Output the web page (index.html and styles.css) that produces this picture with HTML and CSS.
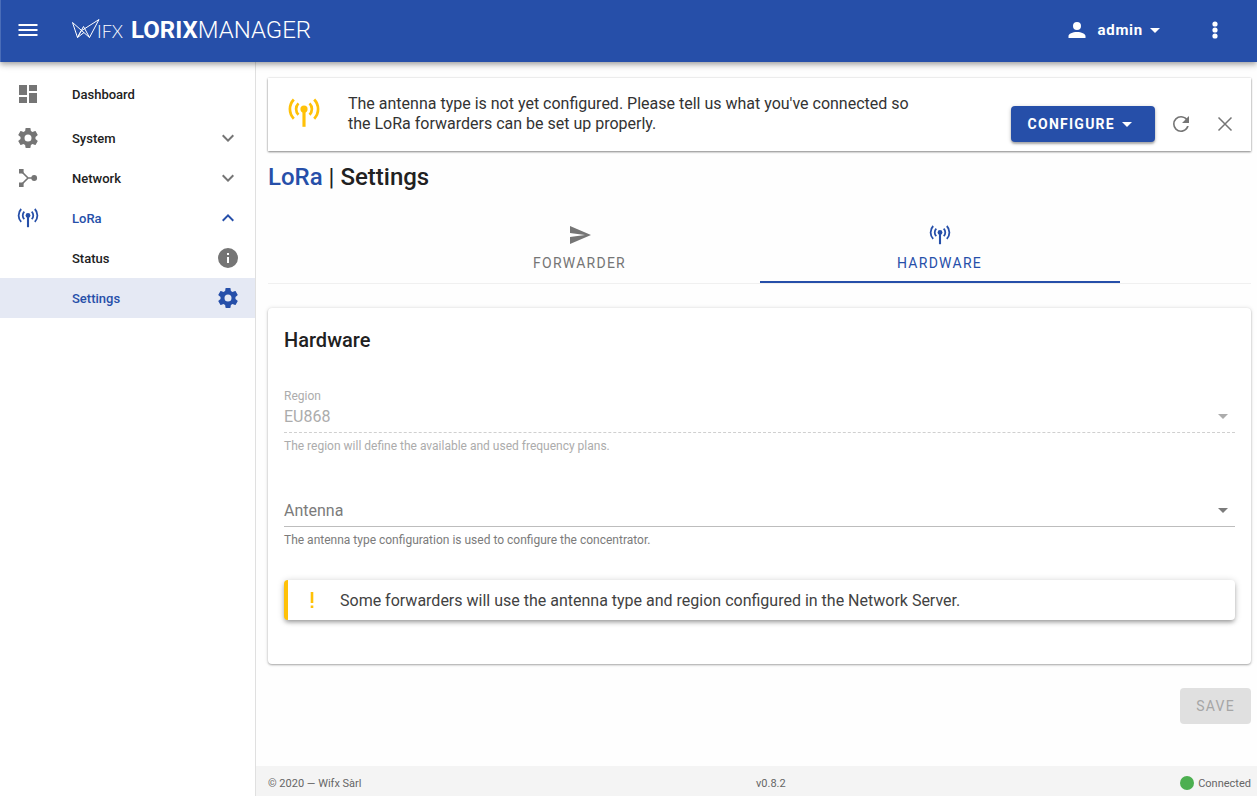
FILE: index.html
```html
<!DOCTYPE html>
<html lang="en">
<head>
<meta charset="utf-8">
<title>LORIX Manager</title>
<link rel="stylesheet" href="styles.css">
</head>
<body>
<svg class="sprite" aria-hidden="true">
  <symbol id="cog" viewBox="0 0 24 24"><path d="M12,15.5A3.5,3.5 0 0,1 8.5,12A3.5,3.5 0 0,1 12,8.5A3.5,3.5 0 0,1 15.5,12A3.5,3.5 0 0,1 12,15.5M19.43,12.97C19.47,12.65 19.5,12.33 19.5,12C19.5,11.67 19.47,11.34 19.43,11L21.54,9.37C21.73,9.22 21.78,8.95 21.66,8.73L19.66,5.27C19.54,5.05 19.27,4.96 19.05,5.05L16.56,6.05C16.04,5.66 15.5,5.32 14.87,5.07L14.5,2.42C14.46,2.18 14.25,2 14,2H10C9.75,2 9.54,2.18 9.5,2.42L9.13,5.07C8.5,5.32 7.96,5.66 7.44,6.05L4.95,5.05C4.73,4.96 4.46,5.05 4.34,5.27L2.34,8.73C2.21,8.95 2.27,9.22 2.46,9.37L4.57,11C4.53,11.34 4.5,11.67 4.5,12C4.5,12.33 4.53,12.65 4.57,12.97L2.46,14.63C2.27,14.78 2.21,15.05 2.34,15.27L4.34,18.73C4.46,18.95 4.73,19.03 4.95,18.95L7.44,17.94C7.96,18.34 8.5,18.68 9.13,18.93L9.5,21.58C9.54,21.82 9.75,22 10,22H14C14.25,22 14.46,21.82 14.5,21.58L14.87,18.93C15.5,18.67 16.04,18.34 16.56,17.94L19.05,18.95C19.27,19.03 19.54,18.95 19.66,18.73L21.66,15.27C21.78,15.05 21.73,14.78 21.54,14.63L19.43,12.97Z"/></symbol>
  <symbol id="antenna" viewBox="0 0 24 24"><circle cx="12" cy="9.4" r="2.4"/><path d="M12 9.4V21.2" fill="none" stroke="currentColor" stroke-width="2.1"/><path d="M5.2 3A9.2 9.2 0 0 0 5.2 15.8M18.8 3A9.2 9.2 0 0 1 18.8 15.8M8.3 5.6A5.4 5.4 0 0 0 8.3 13.2M15.7 5.6A5.4 5.4 0 0 1 15.7 13.2" fill="none" stroke="currentColor" stroke-width="1.8"/></symbol>
  <symbol id="chevron" viewBox="0 0 24 24"><path d="M7.41,8.58L12,13.17L16.59,8.58L18,10L12,16L6,10L7.41,8.58Z"/></symbol>
  <symbol id="caret" viewBox="0 0 24 24"><path d="M7,10L12,15L17,10H7Z"/></symbol>
</svg>
<header class="topbar">
  <button class="icon-button" type="button" aria-label="Menu"><svg class="icon"><path d="M2.500,6H21.500V8H2.500V6M2.500,11H21.500V13H2.500V11M2.500,16H21.500V18H2.500V16Z"/></svg></button>
  <a class="brand" href="#">
    <svg class="brand-mark" viewBox="0 0 28 22" aria-hidden="true"><path d="M0.500 3.500L5.500 18.500L11.500 7.500L17.500 18.500L27 0.500L9 12L5.500 18.500L12 13.500M0.500 3.500L17.500 18.500"/></svg>
    <span class="brand-suffix">IFX</span>
    <span class="brand-name"><b>LORIX</b>MANAGER</span>
  </a>
  <button class="user-button" type="button"><svg class="icon"><path d="M12,4A4,4 0 0,1 16,8A4,4 0 0,1 12,12A4,4 0 0,1 8,8A4,4 0 0,1 12,4M12,14C16.42,14 20.500,15.79 20.500,18V20H3.500V18C3.500,15.79 7.58,14 12,14Z"/></svg><span class="user-name">admin</span><svg class="icon"><use href="#caret"/></svg></button>
  <button class="icon-button" type="button" aria-label="More"><svg class="icon"><path d="M12,15.4A2.6,2.6 0 0,1 14.6,18A2.6,2.6 0 0,1 12,20.6A2.6,2.6 0 0,1 9.4,18A2.6,2.6 0 0,1 12,15.4M12,9.4A2.6,2.6 0 0,1 14.6,12A2.6,2.6 0 0,1 12,14.6A2.6,2.6 0 0,1 9.4,12A2.6,2.6 0 0,1 12,9.4M12,3.4A2.6,2.6 0 0,1 14.6,6A2.6,2.6 0 0,1 12,8.6A2.6,2.6 0 0,1 9.4,6A2.6,2.6 0 0,1 12,3.4Z"/></svg></button>
</header>
<div class="shell">
  <nav class="sidebar">
    <a class="nav-item nav-item--tall" href="#"><svg class="icon"><path d="M13,3V9H21V3M13,21H21V11H13M3,21H11V15H3M3,13H11V3H3V13Z"/></svg><span>Dashboard</span></a>
    <button class="nav-item" type="button" aria-expanded="false"><svg class="icon"><use href="#cog"/></svg><span>System</span><svg class="icon"><use href="#chevron"/></svg></button>
    <button class="nav-item" type="button" aria-expanded="false"><svg class="icon"><path d="M3 3H7.600V7.600H3ZM3 16.400H7.600V21H3Z"/><circle cx="18.200" cy="12" r="2.900"/><path d="M5.500 5.500L12 12L5.500 18.500M12 12H18" fill="none" stroke="currentColor" stroke-width="1.600"/></svg><span>Network</span><svg class="icon"><use href="#chevron"/></svg></button>
    <button class="nav-item nav-item--open" type="button" aria-expanded="true"><svg class="icon"><use href="#antenna"/></svg><span>LoRa</span><svg class="icon icon--flipped"><use href="#chevron"/></svg></button>
    <a class="nav-item nav-item--sub" href="#"><span>Status</span><svg class="icon"><path d="M13,9H11V7H13M13,17H11V11H13M12,2A10,10 0 0,0 2,12A10,10 0 0,0 12,22A10,10 0 0,0 22,12A10,10 0 0,0 12,2Z"/></svg></a>
    <a class="nav-item nav-item--sub nav-item--active" href="#" aria-current="page"><span>Settings</span><svg class="icon"><use href="#cog"/></svg></a>
  </nav>
  <div class="page">
    <main class="content">
      <section class="banner">
        <svg class="icon banner-icon"><use href="#antenna"/></svg>
        <p class="banner-text">The antenna type is not yet configured. Please tell us what you've connected so the LoRa forwarders can be set up properly.</p>
        <div class="banner-actions">
          <button class="configure" type="button">CONFIGURE<svg class="icon"><use href="#caret"/></svg></button>
          <button class="icon-button icon-button--grey" type="button" aria-label="Refresh"><svg class="icon"><path d="M17.65,6.35C16.2,4.9 14.21,4 12,4A8,8 0 0,0 4,12A8,8 0 0,0 12,20C15.73,20 18.84,17.45 19.73,14H18C17.100,16.600 14.700,18.400 12,18.400A6.400,6.400 0 0,1 5.600,12A6.400,6.400 0 0,1 12,5.600C13.800,5.600 15.300,6.300 16.500,7.500L13,11H20V4L17.65,6.35Z"/></svg></button>
          <button class="icon-button icon-button--grey" type="button" aria-label="Close"><svg class="icon"><path d="M5.500 5.500L18.500 18.500M18.500 5.500L5.500 18.500" fill="none" stroke="currentColor" stroke-width="1.500"/></svg></button>
        </div>
      </section>
      <h1 class="title"><a href="#">LoRa</a> <span class="title-divider">|</span> Settings</h1>
      <div class="tabs" role="tablist">
        <button class="tab" type="button" role="tab" aria-selected="false"><svg class="icon"><path d="M2,21L23,12L2,3V10L17,12L2,14V21Z"/></svg>FORWARDER</button>
        <button class="tab tab--active" type="button" role="tab" aria-selected="true"><svg class="icon"><use href="#antenna"/></svg>HARDWARE</button>
      </div>
      <section class="card">
        <h2 class="card-title">Hardware</h2>
        <div class="field field--disabled">
          <label class="field-label" for="region">Region</label>
          <div class="field-control"><select id="region" disabled><option>EU868</option></select><svg class="icon"><use href="#caret"/></svg></div>
          <p class="field-hint">The region will define the available and used frequency plans.</p>
        </div>
        <div class="field field--empty">
          <label class="field-label" for="antenna-type">Antenna</label>
          <div class="field-control"><select id="antenna-type"><option></option></select><svg class="icon"><use href="#caret"/></svg></div>
          <p class="field-hint">The antenna type configuration is used to configure the concentrator.</p>
        </div>
        <div class="notice"><svg class="icon"><path d="M10.700 4H13.300V15H10.700ZM10.700 17.500H13.300V20H10.700Z"/></svg><span>Some forwarders will use the antenna type and region configured in the Network Server.</span></div>
      </section>
      <button class="save" type="button" disabled>SAVE</button>
    </main>
    <footer class="footer">
      <span>© 2020 — Wifx Sàrl</span>
      <span>v0.8.2</span>
      <span class="status"><i class="status-dot"></i>Connected</span>
    </footer>
  </div>
</div>
</body>
</html>
```
FILE: styles.css
```css
:root {
  --primary: #264fa9;
  --amber: #ffc107;
  --grey: #757575;
  --ink: #212121;
}

* { box-sizing: border-box; }

body {
  margin: 0;
  min-height: 100vh;
  display: flex;
  flex-direction: column;
  font-family: Roboto, sans-serif;
  font-size: 16px;
  color: var(--ink);
  background: #fefefe;
}

button, select { font: inherit; color: inherit; }

button {
  border: 0;
  padding: 0;
  background: none;
  cursor: pointer;
}

a { color: inherit; text-decoration: none; }

h1, h2, p { margin: 0; }

.sprite { display: none; }

.icon {
  width: 24px;
  height: 24px;
  flex: none;
  fill: currentColor;
}

.icon--flipped { transform: rotate(180deg); }

.icon-button {
  width: 36px;
  height: 36px;
  display: flex;
  align-items: center;
  justify-content: center;
}

.icon-button--grey { color: var(--grey); }

/* Top bar */

.topbar {
  position: relative;
  z-index: 1;
  height: 62px;
  padding: 0 24px 2px 9px;
  display: flex;
  align-items: center;
  color: #fff;
  background: var(--primary);
  border-left: 1px solid #4a6db8;
  box-shadow: 0 2px 4px -1px rgba(0, 0, 0, .2), 0 4px 5px rgba(0, 0, 0, .14), 0 1px 10px rgba(0, 0, 0, .12);
}

.brand {
  display: flex;
  align-items: center;
  margin-left: 26px;
  margin-right: auto;
}

.brand-mark {
  width: 28px;
  height: 22px;
  fill: none;
  stroke: #fff;
  stroke-width: 1;
}

.brand-suffix {
  margin-left: -3px;
  padding-top: 2px;
  font-family: Lato, sans-serif;
  font-weight: 300;
  font-size: 18px;
}

.brand-name {
  margin-left: 8px;
  font-size: 24px;
  font-weight: 300;
}

.brand-name b { font-weight: 700; }

.user-button {
  display: flex;
  align-items: center;
  margin-right: 30px;
}

.user-name {
  margin: 0 0 0 8px;
  font-size: 15px;
  font-weight: 700;
  letter-spacing: 0.05em;
}

/* Layout */

.shell { flex: 1; display: flex; }

.sidebar {
  width: 256px;
  flex: none;
  padding-top: 8px;
  background: #fff;
  border-right: 1px solid #e0e0e0;
}

.page {
  flex: 1;
  min-width: 0;
  display: flex;
  flex-direction: column;
}

.content {
  flex: 1;
  display: flex;
  flex-direction: column;
  padding: 16px 6px 24px 12px;
}

/* Sidebar navigation */

.nav-item {
  width: 100%;
  height: 40px;
  padding: 0 15px 0 16px;
  display: flex;
  align-items: center;
  gap: 32px;
  font-size: 13px;
  font-weight: 500;
  text-align: left;
}

.nav-item span { flex: 1; }
.nav-item .icon { color: var(--grey); }
.nav-item--tall { height: 48px; }
.nav-item--sub { padding-left: 72px; }

.nav-item--open,
.nav-item--active,
.nav-item--open .icon,
.nav-item--active .icon { color: var(--primary); }

.nav-item--active { background: #e5e9f4; }

/* Banner */

.banner {
  display: flex;
  padding: 16px 8px 9px 16px;
  background: #fff;
  box-shadow: 0 1px 2px rgba(0, 0, 0, .45), 0 0 2px rgba(0, 0, 0, .12);
}

.banner-icon {
  width: 36px;
  height: 36px;
  margin: 1px 26px 0 2px;
  color: var(--amber);
}

.banner-text {
  flex: 1;
  margin-bottom: 8px;
  line-height: 20px;
  color: #333;
}

.banner-actions {
  align-self: flex-end;
  display: flex;
  gap: 8px;
  margin-left: 90px;
}

.configure,
.save {
  height: 36px;
  border-radius: 4px;
  font-size: 14px;
  letter-spacing: 0.09em;
}

.configure {
  display: flex;
  align-items: center;
  padding: 0 16px 0 17px;
  font-weight: 700;
  color: #fff;
  background: var(--primary);
  box-shadow: 0 2px 2px rgba(0, 0, 0, .24), 0 1px 4px rgba(0, 0, 0, .2);
}

/* Heading and tabs */

.title {
  margin: 10px 0 18px;
  font-size: 24px;
  line-height: 32px;
  font-weight: 500;
}

.title a { color: var(--primary); }
.title-divider { font-weight: 400; }

.tabs {
  display: flex;
  justify-content: center;
  border-bottom: 1px solid #f0f0f0;
}

.tab {
  width: 360px;
  height: 72px;
  padding-top: 2px;
  display: flex;
  flex-direction: column;
  align-items: center;
  justify-content: center;
  gap: 6px;
  border-top: 2px solid transparent;
  border-bottom: 2px solid transparent;
  font-size: 14px;
  line-height: 20px;
  font-weight: 400;
  letter-spacing: 0.09em;
  color: var(--grey);
}

.tab--active {
  color: var(--primary);
  border-bottom-color: var(--primary);
}

/* Card and form */

.card {
  margin-top: 24px;
  padding: 16px 16px 44px;
  background: #fff;
  border-radius: 4px;
  box-shadow: 0 1px 2px rgba(0, 0, 0, .3), 0 0 4px rgba(0, 0, 0, .12);
}

.card-title {
  margin-bottom: 32px;
  font-size: 20px;
  line-height: 32px;
  font-weight: 500;
}

.field {
  position: relative;
  margin-bottom: 30px;
  color: #7b7b7b;
}

.field--disabled { color: #acacac; }

.field-label {
  display: block;
  font-size: 12px;
  line-height: 16px;
}

.field--empty { padding-top: 16px; }

/* The label stands in for the value until one is chosen. */
.field--empty .field-label {
  position: absolute;
  top: 16px;
  left: 0;
  font-size: 16px;
  line-height: 26px;
  pointer-events: none;
}

.field-control {
  display: flex;
  align-items: center;
  height: 29px;
  padding-bottom: 4px;
  border-bottom: 1px solid #bdbdbd;
}

.field--disabled .field-control { border-bottom-style: dashed; border-bottom-color: #d0d0d0; }

.field-control select {
  flex: 1;
  height: 24px;
  padding: 0;
  border: 0;
  appearance: none;
  background: none;
  opacity: 1;
}

.field-hint {
  margin-top: 7px;
  font-size: 12px;
  line-height: 12px;
}

.notice {
  display: flex;
  align-items: center;
  gap: 16px;
  margin-top: 34px;
  height: 40px;
  padding-left: 12px;
  border-left: 4px solid var(--amber);
  border-radius: 4px;
  color: #424242;
  background: #fff;
  box-shadow: 0 3px 4px -1px rgba(0, 0, 0, .3), 0 1px 7px rgba(0, 0, 0, .2);
}

.notice .icon { color: var(--amber); }

.save {
  align-self: flex-end;
  margin-top: 24px;
  padding: 0 16px;
  color: #a6a6a6;
  background: #e0e0e0;
}

/* Footer */

.footer {
  display: flex;
  justify-content: space-between;
  align-items: center;
  height: 30px;
  padding: 4px 6px 0 12px;
  font-size: 11px;
  color: #666;
  background: #f4f4f4;
}

.status {
  display: flex;
  align-items: center;
  gap: 4px;
}

.status-dot {
  width: 14px;
  height: 14px;
  border-radius: 50%;
  background: #4caf50;
}
```
